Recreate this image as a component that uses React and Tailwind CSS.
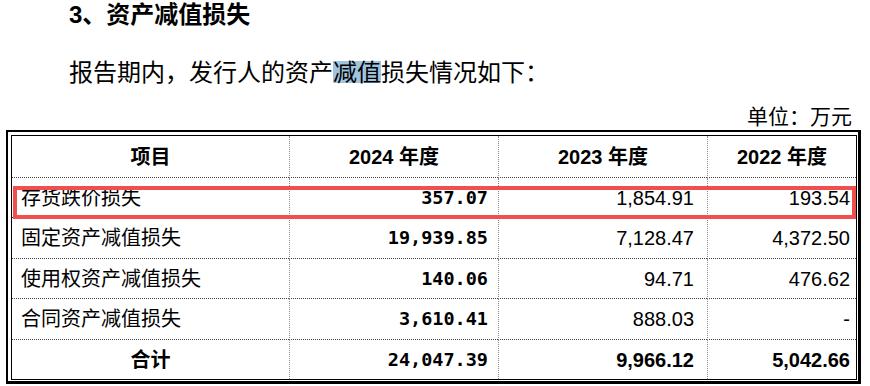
import React from "react";

const rows = [
  { name: "存货跌价损失", a: "357.07", b: "1,854.91", c: "193.54", h: "h-[40px]" },
  { name: "固定资产减值损失", a: "19,939.85", b: "7,128.47", c: "4,372.50", h: "h-[41px]" },
  { name: "使用权资产减值损失", a: "140.06", b: "94.71", c: "476.62", h: "h-[40px]" },
  { name: "合同资产减值损失", a: "3,610.41", b: "888.03", c: "-", h: "h-[41px]" },
];

const cellBase = "flex items-center border-b border-dotted border-b-[#444]";
const colLine = "border-l border-l-[#8a8a8a]";

const App = () => {
  return (
    <div
      className="relative w-[870px] h-[386px] bg-white text-black overflow-hidden font-['Liberation_Sans','Noto_Sans_CJK_SC',sans-serif]"
    >
      {/* heading */}
      <div className="pl-[69px] h-[30px] leading-[30px] text-[24px] font-bold">
        3、资产减值损失
      </div>

      <div className="mt-[28px] pl-[69px] h-[30px] leading-[30px] text-[24px]">
        报告期内，发行人的资产
        <span className="bg-[linear-gradient(to_bottom,transparent_2px,#9fc4e0_2px,#9fc4e0_24px,transparent_24px)]">
          减值
        </span>
        损失情况如下：
      </div>

      <div className="mt-[17px] h-[24px] leading-[24px] text-[21px] text-right pr-[18px]">
        单位：万元
      </div>

      {/* table with thick-thin frame */}
      <div className="mt-[1px] ml-[6px] w-[855px] h-[254px] border-l-2 border-t-2 border-r-[3px] border-b-[3px] border-black pl-[3px] pt-[3px] pr-[1px] pb-[1px]">
        <div className="h-full border border-black grid grid-cols-[277px_209px_209px_149px] content-start text-[20px]">
          {/* header */}
          <div className={`${cellBase} h-[42px] justify-center font-bold`}>项目</div>
          <div className={`${cellBase} ${colLine} h-[42px] justify-center font-bold`}>2024 年度</div>
          <div className={`${cellBase} ${colLine} h-[42px] justify-center font-bold`}>2023 年度</div>
          <div className={`${cellBase} ${colLine} h-[42px] justify-center font-bold`}>2022 年度</div>

          {rows.map((r) => (
            <React.Fragment key={r.name}>
              <div className={`${cellBase} ${r.h} pl-[9px]`}>{r.name}</div>
              <div
                className={`${cellBase} ${colLine} ${r.h} justify-end pr-[10px] font-bold text-[18.5px] font-['DejaVu_Sans_Mono',monospace]`}
              >
                {r.a}
              </div>
              <div className={`${cellBase} ${colLine} ${r.h} justify-end pr-[13px]`}>{r.b}</div>
              <div className={`${cellBase} ${colLine} ${r.h} justify-end pr-[6px]`}>{r.c}</div>
            </React.Fragment>
          ))}

          {/* total */}
          <div className="flex items-center h-[39px] justify-center font-bold">合计</div>
          <div
            className={`flex items-center ${colLine} border-dotted h-[39px] justify-end pr-[10px] font-bold text-[18.5px] font-['DejaVu_Sans_Mono',monospace]`}
          >
            24,047.39
          </div>
          <div className={`flex items-center ${colLine} border-dotted h-[39px] justify-end pr-[13px] font-bold`}>
            9,966.12
          </div>
          <div className={`flex items-center ${colLine} border-dotted h-[39px] justify-end pr-[6px] font-bold`}>
            5,042.66
          </div>
        </div>
      </div>

      {/* red highlight frame */}
      <div className="absolute left-[13px] top-[186px] w-[843px] h-[33px] border-4 border-[#f04f4f]" />
    </div>
  );
};

export default App;
